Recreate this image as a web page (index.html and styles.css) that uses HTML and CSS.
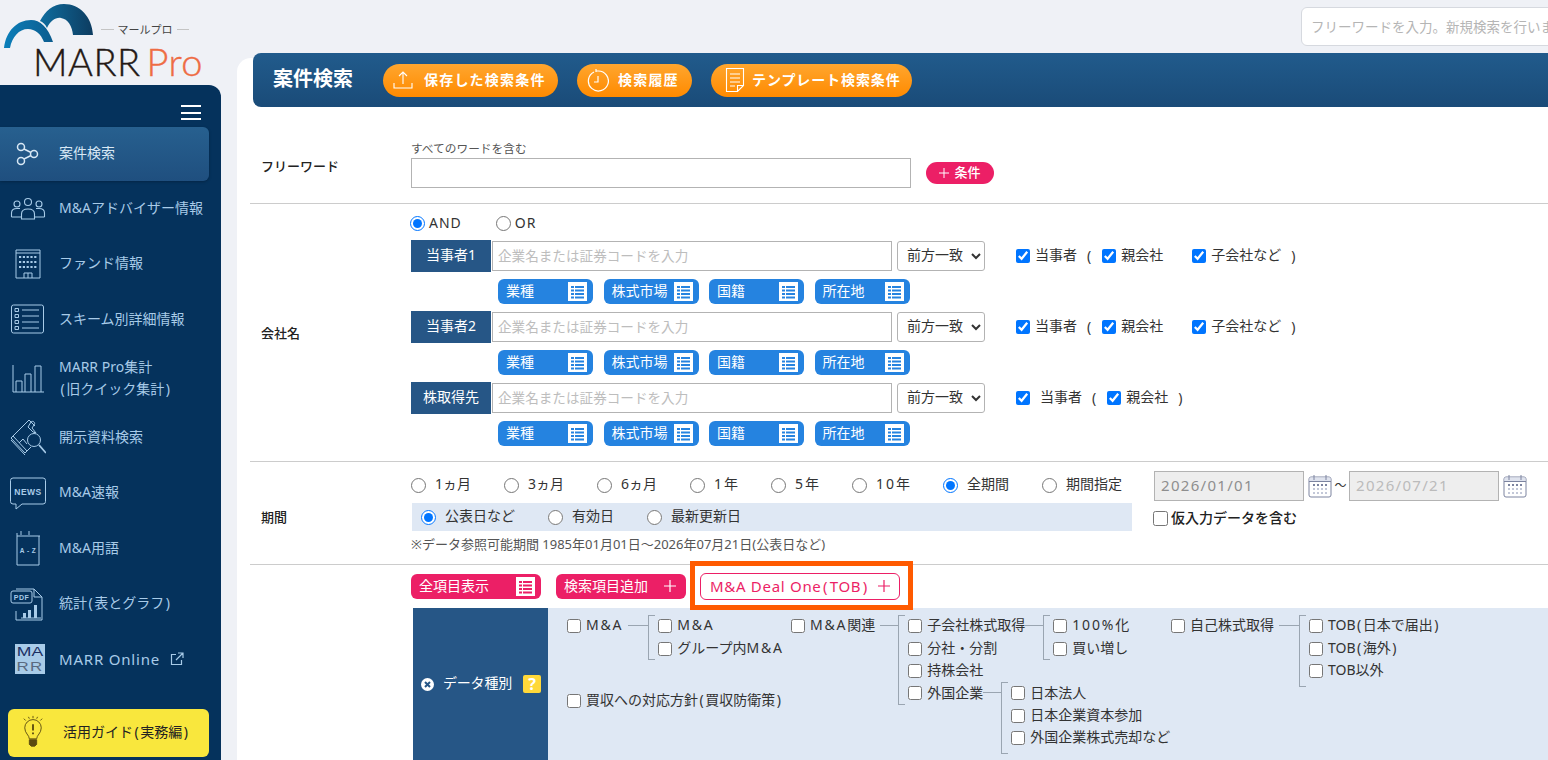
FILE: index.html
```html
<!DOCTYPE html>
<html lang="ja">
<head>
<meta charset="utf-8">
<title>案件検索 | MARR Pro</title>
<link rel="stylesheet" href="styles.css">
</head>
<body>
<svg class="sprite" width="0" height="0">
	<symbol id="i-table" viewBox="0 0 19 19">
		<rect width="19" height="19" fill="#fff"/>
		<path fill="currentColor" d="M3 4h3v2H3zM7 4h9v2H7zM3 7.500h3v2H3zM7 7.500h9v2H7zM3 11h3v2H3zM7 11h9v2H7zM3 14.500h3v2H3zM7 14.500h9v2H7z"/>
	</symbol>
	<symbol id="i-cal" viewBox="0 0 24 24">
		<rect x="1" y="3" width="22" height="20" rx="2" fill="#fff" stroke="#7c84a0"/>
		<path fill="#dfe3ee" d="M1.500 3.500h21v4h-21z"/>
		<path stroke="#7c84a0" d="M6 1v5M18 1v5M1 7.500h22"/>
		<path fill="#7c84a0" d="M5 10h2v2H5zM9 10h2v2H9zM13 10h2v2h-2zM17 10h2v2h-2z"/>
		<path fill="#c3c8d8" d="M5 14h2v2H5zM9 14h2v2H9zM13 14h2v2h-2zM17 14h2v2h-2zM5 18h2v2H5zM9 18h2v2H9zM13 18h2v2h-2zM17 18h2v2h-2z"/>
	</symbol>
	<symbol id="i-plus" viewBox="0 0 12 12">
		<path d="M6 0v12M0 6h12" stroke="currentColor" stroke-width="1.200" fill="none"/>
	</symbol>
</svg>

<div class="app">
	<aside class="left">
		<div class="logo">
			<svg class="logo_mark" width="100" height="50" viewBox="0 0 100 50">
				<defs>
					<linearGradient id="arcA" x1="0" x2="1"><stop offset="0" stop-color="#0b7fba"/><stop offset="1" stop-color="#0c5c8e"/></linearGradient>
					<linearGradient id="arcB" x1="0" x2="1"><stop offset="0" stop-color="#0f6d9f"/><stop offset="1" stop-color="#0d3c60"/></linearGradient>
				</defs>
				<path fill="url(#arcB)" d="M93 35C92 17 80 4 64 4C53 4 45 11 40 21C43 22 45 24 47 28C50 21 56 17 61 18C68 19 72 26 73 35Z"/>
				<path fill="url(#arcA)" d="M4 48C6 31 17 20 31 20C40 20 48 27 53 42H44C41 34 35 29 28 29C19 29 12 37 10 48Z"/>
			</svg>
			<div class="logo_sub">マールプロ</div>
			<div class="logo_name">MARR <span>Pro</span></div>
		</div>
		<nav class="side">
			<div class="side_top"><span class="burger"></span></div>
			<a class="side_item active">
				<svg width="36" height="36" viewBox="0 0 36 36" fill="none" stroke="currentColor" stroke-width="1.500"><circle cx="11" cy="12" r="3.500"/><circle cx="24" cy="19" r="3.500"/><circle cx="11" cy="26" r="3.500"/><path d="M14 14l7 3.500M14 24l7-3.500"/></svg>
				<span>案件検索</span>
			</a>
			<a class="side_item">
				<svg width="36" height="36" viewBox="0 0 36 36" fill="none" stroke="currentColor" stroke-width="1.100"><circle cx="7" cy="14" r="3"/><circle cx="18" cy="12" r="3.500"/><circle cx="29" cy="14" r="3"/><path d="M1.500 27v-4c0-3 2-4.500 5.500-4.500h3M34.500 27v-4c0-3-2-4.500-5.500-4.500h-3M1.500 27H11M25 27h9.500"/><path d="M11.500 29v-5c0-3 2.500-5 6.500-5s6.500 2 6.500 5v5z"/></svg>
				<span>M&amp;Aアドバイザー情報</span>
			</a>
			<a class="side_item">
				<svg width="36" height="36" viewBox="0 0 36 36" fill="none" stroke="currentColor" stroke-width="1"><path d="M6 5h24M6 8h24M6 5v28h24V5M14 33v-5h8v5M18 28v5"/><path stroke-width="2" stroke-dasharray="2.200 1.600" d="M9 12h18M9 17h18M9 22h18"/></svg>
				<span>ファンド情報</span>
			</a>
			<a class="side_item">
				<svg width="36" height="36" viewBox="0 0 36 36" fill="none" stroke="currentColor" stroke-width="1"><rect x="1.500" y="4" width="32" height="28" rx="2"/><path d="M12 9h17M12 15h17M12 21h17M12 27h17"/><path d="M5 7.500h3.500v3H5zM5 13.500h3.500v3H5zM5 19.500h3.500v3H5zM5 25.500h3.500v3H5z"/></svg>
				<span>スキーム別詳細情報</span>
			</a>
			<a class="side_item double">
				<svg width="36" height="36" viewBox="0 0 36 36" fill="none" stroke="currentColor" stroke-width="1"><path d="M3 5v27h31M6 32V21h6v11M15 32V14h6v18M25 32V6h6v26"/></svg>
				<span>MARR Pro集計<br><span class="pr">(</span>旧クイック集計<span class="pr">)</span></span>
			</a>
			<a class="side_item">
				<svg width="36" height="36" viewBox="0 0 36 36" fill="none" stroke="currentColor" stroke-width="1"><path d="M1 19L19 1l6 6M1 19l14 15 6-6M1 21l14 15M3 17l14 15"/><path d="M21 3c2-2 5 1 3 3l-2 3 4 5-3-1-5-5z"/><circle cx="24" cy="21" r="6.500"/><path d="M29 26l7 8" stroke-width="1.800"/><path d="M9 24l4-4 4 5"/></svg>
				<span>開示資料検索</span>
			</a>
			<a class="side_item">
				<svg width="36" height="36" viewBox="0 0 36 36" fill="none" stroke="currentColor" stroke-width="1"><path d="M3 4h30a2.500 2.500 0 0 1 2.500 2.500v21A2.500 2.500 0 0 1 33 30H12l-6 5v-5H3A2.500 2.500 0 0 1 .5 27.500v-21A2.500 2.500 0 0 1 3 4z"/><text class="ico_txt" x="18" y="21" text-anchor="middle" font-size="8.500">NEWS</text></svg>
				<span>M&amp;A速報</span>
			</a>
			<a class="side_item">
				<svg width="36" height="36" viewBox="0 0 36 36" fill="none" stroke="currentColor" stroke-width="1"><path d="M7 6h23M7 3v32h22V6M11 1v4M19 1v4"/><text class="ico_txt" x="18" y="23" text-anchor="middle" font-size="6.500">A - Z</text></svg>
				<span>M&amp;A用語</span>
			</a>
			<a class="side_item">
				<svg width="36" height="36" viewBox="0 0 36 36" fill="none" stroke="currentColor" stroke-width="1"><path d="M6 4h18l8 8v23H6v-9M24 4v8h8"/><rect x="1" y="6" width="21" height="12" rx="2" fill="#05325c"/><text class="ico_txt" x="11.500" y="15" text-anchor="middle" font-size="7">PDF</text><path d="M11 33h20" /><path fill="currentColor" stroke="none" d="M13 28h3v5h-3zM18 25h3v8h-3zM24 20h3v13h-3z"/></svg>
				<span>統計<span class="pr">(</span>表とグラフ<span class="pr">)</span></span>
			</a>
			<a class="side_item">
				<span class="marr_icon"><b>MA</b><i>RR</i></span>
				<span class="online">MARR Online
					<svg width="14" height="14" viewBox="0 0 14 14" fill="none" stroke="currentColor" stroke-width="1.200"><path d="M6 2.500H1.500v10h10V8M8 1h5v5M13 1L6 8"/></svg>
				</span>
			</a>
			<a class="guide">
				<svg width="22" height="33" viewBox="0 0 24 34" fill="none" stroke="#5a4a10" stroke-width="1"><path d="M4 5L2 3M8 3L7 1M16 3l1-2M20 5l2-2M12 2.500V0"/><path d="M8 25c0-4-5-6-5-12a9 9 0 0 1 18 0c0 6-5 8-5 12z"/><path stroke-width="2" d="M12 9v7M12 18v2"/><path fill="#5a4a10" d="M8 26h8v5l-2 2h-4l-2-2z"/></svg>
				<span>活用ガイド<span class="pr">(</span>実務編<span class="pr">)</span></span>
			</a>
		</nav>
	</aside>

	<div class="right">
		<div class="top">
			<input class="top_search" type="text" placeholder="フリーワードを入力。新規検索を行います">
		</div>
		<main class="content">
			<div class="title_bar">
				<h1>案件検索</h1>
				<a class="orange btn1">
					<svg width="20" height="20" viewBox="0 0 20 20" fill="none" stroke="#fff" stroke-width="1.100"><path d="M1 13v5h18v-5M10 14V2M6 6l4-4 4 4"/></svg>
					保存した検索条件
				</a>
				<a class="orange btn2">
					<svg width="22" height="24" viewBox="0 0 22 24" fill="none" stroke="#fff" stroke-width="1.200"><path d="M7 4a10 10 0 1 0 4-1H9M9 1v3M11 8v6H7"/></svg>
					検索履歴
				</a>
				<a class="orange btn3">
					<svg width="20" height="26" viewBox="0 0 20 26" fill="none" stroke="#fff" stroke-width="1.100"><path d="M1.500 1.500h17v17l-6 6h-11zM18.500 18.500h-6v6M5 7h10M5 11h10M5 15h10M5 19h5"/></svg>
					テンプレート検索条件
				</a>
			</div>

			<section class="row row_word">
				<div class="row_label">フリーワード</div>
				<div class="row_body">
					<div class="caption">すべてのワードを含む</div>
					<div class="word_line">
						<input class="text word_input" type="text">
						<a class="cond"><svg width="10" height="10"><use href="#i-plus"/></svg>条件</a>
					</div>
				</div>
			</section>

			<section class="row row_company">
				<div class="row_label">会社名</div>
				<div class="row_body">
					<div class="andor">
						<label><input type="radio" name="andor" checked><span class="ltn">AND</span></label>
						<label><input type="radio" name="andor"><span class="ltn">OR</span></label>
					</div>

					<div class="party">
						<div class="party_name">当事者1</div>
						<input class="text party_input" type="text" placeholder="企業名または証券コードを入力">
						<select class="match"><option>前方一致</option></select>
						<div class="party_checks">
							<label><input type="checkbox" checked>当事者</label><span class="paren">(</span>
							<label class="sp28"><input type="checkbox" checked>親会社</label>
							<label class="sp28"><input type="checkbox" checked>子会社など</label><span class="paren">)</span>
						</div>
					</div>
					<div class="chips">
						<a class="chip">業種<svg width="19" height="19"><use href="#i-table"/></svg></a>
						<a class="chip">株式市場<svg width="19" height="19"><use href="#i-table"/></svg></a>
						<a class="chip">国籍<svg width="19" height="19"><use href="#i-table"/></svg></a>
						<a class="chip">所在地<svg width="19" height="19"><use href="#i-table"/></svg></a>
					</div>

					<div class="party">
						<div class="party_name">当事者2</div>
						<input class="text party_input" type="text" placeholder="企業名または証券コードを入力">
						<select class="match"><option>前方一致</option></select>
						<div class="party_checks">
							<label><input type="checkbox" checked>当事者</label><span class="paren">(</span>
							<label class="sp28"><input type="checkbox" checked>親会社</label>
							<label class="sp28"><input type="checkbox" checked>子会社など</label><span class="paren">)</span>
						</div>
					</div>
					<div class="chips">
						<a class="chip">業種<svg width="19" height="19"><use href="#i-table"/></svg></a>
						<a class="chip">株式市場<svg width="19" height="19"><use href="#i-table"/></svg></a>
						<a class="chip">国籍<svg width="19" height="19"><use href="#i-table"/></svg></a>
						<a class="chip">所在地<svg width="19" height="19"><use href="#i-table"/></svg></a>
					</div>

					<div class="party">
						<div class="party_name">株取得先</div>
						<input class="text party_input" type="text" placeholder="企業名または証券コードを入力">
						<select class="match"><option>前方一致</option></select>
						<div class="party_checks wide">
							<label><input type="checkbox" checked>当事者</label><span class="paren">(</span>
							<label><input type="checkbox" checked>親会社</label><span class="paren">)</span>
						</div>
					</div>
					<div class="chips">
						<a class="chip">業種<svg width="19" height="19"><use href="#i-table"/></svg></a>
						<a class="chip">株式市場<svg width="19" height="19"><use href="#i-table"/></svg></a>
						<a class="chip">国籍<svg width="19" height="19"><use href="#i-table"/></svg></a>
						<a class="chip">所在地<svg width="19" height="19"><use href="#i-table"/></svg></a>
					</div>
				</div>
			</section>

			<section class="row row_period">
				<div class="row_label">期間</div>
				<div class="row_body period">
					<div class="period_left">
						<div class="radios period_radios">
							<label><input type="radio" name="span">1ヵ月</label>
							<label><input type="radio" name="span">3ヵ月</label>
							<label><input type="radio" name="span">6ヵ月</label>
							<label><input type="radio" name="span"><span class="num">1</span>年</label>
							<label><input type="radio" name="span"><span class="num">5</span>年</label>
							<label><input type="radio" name="span"><span class="num">10</span>年</label>
							<label><input type="radio" name="span" checked>全期間</label>
							<label><input type="radio" name="span">期間指定</label>
						</div>
						<div class="radios band">
							<label><input type="radio" name="kind" checked>公表日など</label>
							<label><input type="radio" name="kind">有効日</label>
							<label><input type="radio" name="kind">最新更新日</label>
						</div>
						<div class="note">※データ参照可能期間 1985年01月01日～2026年07月21日(公表日など)</div>
					</div>
					<div class="period_right">
						<div class="dates">
							<input class="text date first" type="text" value="2026/01/01" readonly>
							<svg width="24" height="24"><use href="#i-cal"/></svg>
							<span class="tilde">～</span>
							<input class="text date" type="text" value="2026/07/21" readonly>
							<svg width="24" height="24"><use href="#i-cal"/></svg>
						</div>
						<label class="provisional"><input type="checkbox">仮入力データを含む</label>
					</div>
				</div>
			</section>

			<section class="items">
				<div class="items_bar">
					<a class="pink">全項目表示<svg width="19" height="19"><use href="#i-table"/></svg></a>
					<a class="pink">検索項目追加<svg class="plus" width="12" height="12"><use href="#i-plus"/></svg></a>
					<div class="deal_wrap">
						<a class="deal"><span>M&amp;A Deal One<span class="pr">(</span>TOB<span class="pr">)</span></span><svg width="12" height="12"><use href="#i-plus"/></svg></a>
					</div>
				</div>
				<div class="data_panel">
					<div class="data_head">
						<svg width="13" height="13" viewBox="0 0 13 13"><circle cx="6.500" cy="6.500" r="6.500" fill="#fff"/><path d="M4 4l5 5M9 4l-5 5" stroke="#265686" stroke-width="2"/></svg>
						<span>データ種別</span>
						<b class="help">?</b>
					</div>
					<div class="tree">
						<div class="tree_col col1">
							<div class="group">
								<label class="node"><input type="checkbox"><span class="ltn">M&amp;A</span></label>
								<span class="conn w20"></span>
								<div class="branch">
									<label class="node"><input type="checkbox"><span class="ltn">M&amp;A</span></label>
									<label class="node"><input type="checkbox"><span>グループ内<span class="ltn">M&amp;A</span></span></label>
								</div>
							</div>
							<label class="node defence"><input type="checkbox"><span>買収への対応方針<span class="pr">(</span>買収防衛策<span class="pr">)</span></span></label>
						</div>
						<div class="tree_col col2">
							<div class="group">
								<label class="node"><input type="checkbox"><span><span class="ltn">M&amp;A</span>関連</span></label>
								<span class="conn w18"></span>
								<div class="branch">
									<div class="group one">
										<label class="node"><input type="checkbox">子会社株式取得</label>
										<span class="conn flush"></span>
										<div class="branch">
											<label class="node"><input type="checkbox"><span class="ltn">100%化</span></label>
											<label class="node"><input type="checkbox">買い増し</label>
										</div>
									</div>
									<label class="node"><input type="checkbox">分社・分割</label>
									<label class="node"><input type="checkbox">持株会社</label>
									<div class="group one">
										<label class="node"><input type="checkbox">外国企業</label>
										<span class="conn flush"></span>
										<div class="branch tall">
											<label class="node"><input type="checkbox">日本法人</label>
											<label class="node"><input type="checkbox">日本企業資本参加</label>
											<label class="node"><input type="checkbox">外国企業株式売却など</label>
										</div>
									</div>
								</div>
							</div>
						</div>
						<div class="tree_col col3">
							<div class="group">
								<label class="node"><input type="checkbox">自己株式取得</label>
								<span class="conn w20"></span>
								<div class="branch tall">
									<label class="node"><input type="checkbox"><span>TOB<span class="pr">(</span>日本で届出<span class="pr">)</span></span></label>
									<label class="node"><input type="checkbox"><span>TOB<span class="pr">(</span>海外<span class="pr">)</span></span></label>
									<label class="node"><input type="checkbox">TOB以外</label>
								</div>
							</div>
						</div>
					</div>
				</div>
			</section>
		</main>
	</div>
</div>
</body>
</html>
```

FILE: styles.css
```css
*{margin:0;padding:0;box-sizing:border-box;}
html,body{width:1548px;height:760px;overflow:hidden;}
body{background:#eff1f6;color:#333;font-family:"Noto Sans","Noto Sans CJK JP",sans-serif;font-size:14px;line-height:1.4;}
a{display:block;text-decoration:none;}
input,select{font-family:inherit;font-size:14px;}
label{display:flex;align-items:center;padding-bottom:2px;}
label input{margin-top:2px;}
.sprite{position:absolute;}
.ltn{letter-spacing:1px;}
.pr{padding:0 1.500px;}

.app{display:grid;grid-template-columns:237px 1fr;height:760px;}

/*logo*/
.logo{height:85px;position:relative;}
.logo_mark{position:absolute;left:0;top:0;}
.logo_sub{position:absolute;left:101px;top:22px;width:88px;display:flex;justify-content:center;align-items:center;gap:4px;font-size:11px;color:#444;}
.logo_sub::before,.logo_sub::after{content:"";flex:1;height:1px;background:#c4c4c4;}
.logo_name{position:absolute;left:33px;top:37px;font-family:"Lato",sans-serif;font-weight:300;font-size:38px;line-height:48px;color:#231815;white-space:nowrap;letter-spacing:.5px;word-spacing:-5px;-webkit-text-stroke:.4px currentColor;}
.logo_name span{color:#ee6c44;}

/*left menu*/
.side{width:221px;height:675px;background:#05325c;border-top-right-radius:12px;color:#a8cbe8;}
.side_top{height:42px;display:flex;justify-content:flex-end;padding:20px 20px 0 0;}
.burger{display:block;width:20px;height:15px;border-top:2px solid #fff;border-bottom:2px solid #fff;position:relative;}
.burger::after{content:"";position:absolute;left:0;right:0;top:4.5px;height:2px;background:#fff;}
.side_item{display:flex;align-items:center;gap:13px;height:55.500px;padding:0 0 2px 10px;line-height:22px;white-space:nowrap;}
.side_item svg{flex:none;}
.side_item.active{width:209px;height:54px;color:#d8e8f5;background:linear-gradient(#27608f,#1f4f7f);border-radius:0 6px 6px 0;box-shadow:0 1px 3px rgba(0,0,0,.25);}
.side_item.double{height:62.500px;}
.ico_txt{font-family:"Liberation Sans",sans-serif;font-weight:bold;fill:currentColor;stroke:none;letter-spacing:.5px;}
.marr_icon{display:block;width:30px;height:30px;margin:0 1px 0 5px;background:#a8cbe8;font-family:"Liberation Sans",sans-serif;font-size:13px;line-height:15px;text-align:center;flex:none;}
.marr_icon b{display:block;font-weight:normal;color:#1b2f63;transform:scaleX(1.35);}
.marr_icon i{display:block;font-style:normal;color:#5a6a80;transform:scaleX(1.3);letter-spacing:1px;}
.online{display:flex;align-items:center;gap:10px;letter-spacing:.8px;font-size:15px;}
.guide{display:flex;align-items:center;gap:19px;width:201px;height:48px;margin:21px 0 0 8px;padding:0 0 2px 14px;background:#f9e73d;border-radius:6px;color:#222;}

/*right*/
.right{min-width:0;}
.top{height:53px;padding:7px 0 0 1064px;}
.top_search{display:block;width:300px;height:39px;border:1px solid #d6d9df;border-radius:6px;background:#fff;padding-left:9px;font-size:13.500px;}
.top_search::placeholder{color:#b5b5b5;}
.content{margin-top:5px;background:#fff;border-top-left-radius:14px;padding-left:16px;height:702px;}

.title_bar{position:relative;top:-5px;margin-bottom:-5px;height:54px;display:flex;align-items:center;padding-left:20px;background:linear-gradient(#215b8c,#1a4b78);border-radius:8px 0 0 8px;color:#fff;}
.title_bar h1{font-size:20px;font-weight:700;width:110px;padding-bottom:3px;}
.orange{display:flex;align-items:center;height:33px;padding-bottom:1px;border-radius:17px;background:linear-gradient(#ffa62e,#ff8a00);color:#fff;font-weight:700;letter-spacing:1.200px;white-space:nowrap;}
.btn1{width:175px;gap:11px;padding-left:10px;margin-right:19px;}
.btn2{width:115px;gap:9px;padding-left:10px;margin-right:19px;}
.btn3{width:201px;gap:7px;padding-left:14px;letter-spacing:.9px;}

/*form rows*/
.row{display:flex;margin-right:0;border-bottom:1px solid #ccc;margin-left:-3px;padding-left:11px;}
.row_label{width:150px;flex:none;align-self:center;font-size:13px;font-weight:500;color:#222;}
.row_body{flex:1;min-width:0;}
.text{border:1px solid #b3b3b3;background:#fff;height:30px;padding:0 5px 2px;display:block;}
.text::placeholder{color:#bdbdbd;font-size:13.600px;}

.row_word{margin-top:22px;padding-top:12px;padding-bottom:15px;}
.row_word .row_label{margin-top:3px;}
.caption{height:17px;font-size:11.700px;line-height:15px;color:#555;}
.word_line{display:flex;align-items:center;gap:15px;}
.word_input{width:500px;}
.cond{display:flex;align-items:center;justify-content:center;gap:5px;width:68px;height:22px;padding-bottom:1px;border-radius:11px;background:#ec1f66;color:#fff;font-size:13px;font-weight:500;}

.row_company{padding-top:9px;padding-bottom:8px;}
.andor{display:flex;gap:34px;height:20px;margin:0 0 7px -1px;}
.andor label{padding:0;}
.andor input{margin:0 4px 0 0;width:15px;height:15px;}
.party{display:flex;align-items:center;height:32px;}
.party_name{width:80px;height:32px;line-height:30px;text-align:center;background:#265686;color:#fff;}
.party_input{width:400px;margin-left:1px;}
.match{width:88px;height:30px;margin-left:5px;border:1px solid #b3b3b3;border-radius:3px;background:#fff;padding:0 0 3px 5px;color:#333;}
.party_checks{display:flex;align-items:center;margin-left:31px;white-space:nowrap;}
.party_checks input{width:14px;height:14px;margin-right:5px;}
.paren{margin:0 11px 0 10px;}
.party_checks .sp28 + .sp28{margin-left:29px;}
.party_checks.wide label:first-child input{margin-right:10px;}
.chips{display:flex;gap:10.500px;height:25px;margin:7px 0;padding-left:87px;}
.chip{display:flex;align-items:center;justify-content:space-between;width:95px;height:25px;padding:0 6px 1px 8px;border-radius:6px;background:#2583e0;color:#fff;}
.chip svg{color:#2583e0;}

.row_period{padding-top:9px;height:103px;}
.period{display:flex;}
.period_left{width:743px;flex:none;}
.radios{display:flex;align-items:center;gap:33px;}
.radios input{width:15px;height:15px;margin-right:9px;}
.period_radios{height:28px;margin-bottom:4px;white-space:nowrap;}
.num{letter-spacing:2px;}
.band{width:720px;height:28px;margin-left:1px;padding-left:9px;background:#dfe8f4;}
.note{margin-top:5px;font-size:13px;line-height:16px;color:#555;white-space:nowrap;}
.dates{display:flex;align-items:center;}
.date{width:150px;background:#eee;color:#bbb;font-size:15px;letter-spacing:1.300px;padding:0 6px 2px;}
.date.first{color:#8e8e8e;}
.dates svg{margin-left:4px;}
.tilde{width:17px;font-size:12px;text-align:center;}
.provisional{margin-top:7px;margin-left:-1px;font-weight:500;color:#222;}
.provisional input{width:15px;height:15px;margin-right:3px;}

/*items*/
.items{margin-left:158px;padding-top:8px;}
.items_bar{display:flex;align-items:center;height:27px;margin-bottom:8px;}
.pink{display:flex;align-items:center;justify-content:space-between;width:130px;height:25px;margin-right:15px;padding:0 6px 1px 8px;border-radius:6px;background:#ec1f66;color:#fff;}
.pink svg{color:#ec1f66;}
.pink .plus{color:#fff;margin-right:4px;}
.pink + .pink{margin-right:14px;}
.deal_wrap{position:relative;z-index:1;}
.deal_wrap::before{content:"";position:absolute;left:-10px;right:-13px;top:-12px;bottom:-10px;border:5px solid #ff5a00;background:#fff;z-index:-1;}
.deal{display:flex;align-items:center;justify-content:space-between;width:200px;height:27px;padding:0 9px 1px;border:1px solid #ec1f66;border-radius:6px;background:#fff;color:#ec1f66;font-size:15px;letter-spacing:.7px;white-space:nowrap;}

.data_panel{display:flex;height:152px;margin-left:2px;background:#dfe8f4;}
.data_head{display:flex;align-items:center;width:135px;flex:none;padding-left:8px;background:#265686;color:#fff;}
.data_head span{margin:0 11px 0 9px;padding-bottom:2px;letter-spacing:-.2px;}
.help{display:block;width:18px;height:18px;line-height:18px;text-align:center;background:#ffd83a;color:#fff;border-radius:2px;font-size:16px;}

.tree{display:flex;padding:7px 0 0 19px;}
.tree_col{flex:none;}
.col1{width:224px;}
.col2{width:380px;}
.group{display:flex;align-items:flex-start;}
.group.one{height:22.400px;}
.node{height:22.400px;white-space:nowrap;}
.node input{width:14px;height:14px;margin-right:5px;flex:none;}
.node .ltn{letter-spacing:1.800px;}
.conn{display:block;flex:none;height:1px;margin-top:10px;background:#9aa5b1;}
.conn.w20{width:20px;margin-left:5px;}
.conn.w18{width:18px;margin-left:5px;}
.conn.flush{width:18px;}
.branch{position:relative;flex:none;padding-left:9px;border-left:1px solid #9aa5b1;}
.branch.tall{padding-bottom:5px;}
.branch::before,.branch::after{content:"";position:absolute;left:0;width:6px;height:1px;background:#9aa5b1;}
.branch::before{top:0;}
.branch::after{bottom:0;}
.defence{margin-top:30px;}
```
